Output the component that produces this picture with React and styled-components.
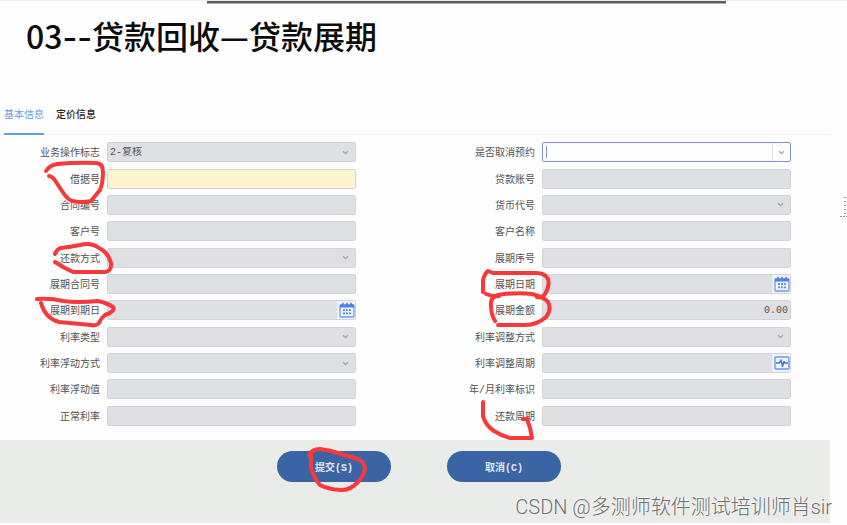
import React from "react";
import styled, { createGlobalStyle } from "styled-components";

const GlobalStyle = createGlobalStyle`
  * {
    box-sizing: border-box;
  }

  body {
    margin: 0;
    background: #fefefe;
    font-family: "Liberation Mono", "Noto Sans CJK SC", monospace;
    font-size: 10px;
    color: #535355;
  }

  button,
  input,
  select {
    font: inherit;
    color: inherit;
  }
`;

const Page = styled.div`
  position: relative;
  display: flex;
  flex-direction: column;
  min-height: 100vh;
  padding: 0 17px 2px 0;
`;

const TopBar = styled.div`
  height: 4px;
  margin-right: -17px;
  padding: 0 121px 0 207px;
  border-top: 1px solid #ededed;

  &::before {
    content: "";
    display: block;
    height: 2px;
    background: #5c6064;
    border-bottom: 1px solid #a9abad;
  }
`;

const Title = styled.h1`
  margin: 0;
  padding: 9px 26px 0;
  font-family: "Noto Sans CJK SC", sans-serif;
  font-size: 32px;
  font-weight: 500;
  line-height: 44px;
  color: #0c0c0c;

  span {
    font-family: Inter, sans-serif;
    line-height: 1;
  }
`;

const Tabs = styled.nav`
  display: flex;
  gap: 12px;
  margin-top: 49px;
  padding-left: 4px;
  border-bottom: 1px solid #f1f1f1;
`;

const Tab = styled.button`
  padding: 0 0 7px;
  margin-bottom: -1px;
  border: none;
  border-bottom: 2px solid ${(p) => (p.$active ? "#5b9fdf" : "transparent")};
  background: none;
  line-height: 20px;
  font-weight: ${(p) => (p.$active ? 400 : 500)};
  color: ${(p) => (p.$active ? "#5b9fdf" : "#2c2222")};
`;

const Form = styled.form`
  flex: 1;
  display: flex;
  flex-direction: column;
`;

const Fields = styled.div`
  flex: 1;
  display: grid;
  grid-template-columns: 1fr 1fr;
  grid-auto-rows: minmax(24px, 1fr);
  column-gap: 79px;
  padding: 4px 39px 11px 0;
`;

const Row = styled.div`
  display: flex;
  align-items: center;
  gap: 7px;
`;

const Label = styled.label`
  position: relative;
  width: 100px;
  flex: none;
  padding-top: 4px;
  line-height: 20px;
  text-align: right;
  white-space: nowrap;
`;

const backgrounds = {
  required: "#fef4d2",
  focus: "#fefefe",
};

const Control = styled.div`
  position: relative;
  flex: 1;
  min-width: 0;
  display: flex;
  align-items: center;
  height: 20px;
  border: 1px solid ${(p) => (p.$tone === "focus" ? "#7f93cb" : "#d3d4d6")};
  border-radius: 2px;
  background: ${(p) => backgrounds[p.$tone] || "#dfe0e4"};
`;

const Input = styled.input`
  flex: 1;
  min-width: 0;
  height: 100%;
  padding: 0 2px;
  border: none;
  outline: none;
  background: none;
  text-align: ${(p) => (p.$right ? "right" : "left")};
`;

const Select = styled.select`
  flex: 1;
  min-width: 0;
  height: 100%;
  padding: 0 18px 0 2px;
  border: none;
  outline: none;
  background: none;
  appearance: none;
`;

const Caret = styled.span`
  width: 1px;
  height: 12px;
  margin-left: 3px;
  background: #8b97bb;
`;

const Addon = styled.button`
  display: flex;
  align-items: center;
  justify-content: center;
  width: 18px;
  height: 18px;
  padding: 0;
  border: none;
  border-left: 1px solid ${(p) => (p.$plain ? "#d6e3f5" : "#eeeff2")};
  background: ${(p) => (p.$plain ? "none" : "#f1f3f8")};
`;

const SelectArrow = styled.span`
  position: absolute;
  right: 6px;
  display: flex;
  pointer-events: none;
`;

// Pen strokes start from the left edge and vertical middle of their owner
const Pen = styled.svg`
  position: absolute;
  z-index: 1;
  left: 0;
  top: 50%;
  width: 1px;
  height: 1px;
  overflow: visible;
  pointer-events: none;
  fill: none;
  stroke: #f93939;
  stroke-width: 4;
  stroke-linecap: round;
  stroke-linejoin: round;
`;

const Footer = styled.footer`
  position: relative;
  display: flex;
  justify-content: center;
  gap: 56px;
  height: 83px;
  padding: 11px 0 0 8px;
  background: #eaecea;
`;

const ActionButton = styled.button`
  position: relative;
  width: 114px;
  height: 31px;
  padding: 0;
  border: none;
  border-radius: 16px;
  background: #3b64a5;
  color: #e4eaf5;
  font-weight: 700;
`;

const Watermark = styled.span`
  position: absolute;
  right: -2px;
  bottom: 2px;
  font-family: Roboto, "Noto Sans CJK SC", sans-serif;
  font-size: 20px;
  font-weight: 300;
  line-height: 28px;
  white-space: nowrap;
  color: #6f7070;
  text-shadow: -1px -1px 0 #f8f8f8;
`;

const EdgeMark = styled.svg`
  position: absolute;
  right: 0;
  top: 196px;
`;

const Chevron = () => (
  <svg width="7" height="5" viewBox="0 0 7 5" fill="none" stroke="#a0a1a6">
    <path d="M1 1.2 3.5 3.6 6 1.2" strokeWidth="1.2" />
  </svg>
);

const CalendarIcon = () => (
  <svg width="16" height="16" viewBox="0 0 16 16" fill="none">
    <rect x="1" y="3" width="14" height="12" rx="1" stroke="#6f9cf0" strokeWidth="1.3" />
    <path d="M1 2.5h14v3H1z" fill="#4f82ee" />
    <path d="M4 .8v3M8 .8v3M12 .8v3" stroke="#4f82ee" strokeWidth="1.6" />
    <path
      d="M4 8.2h2M7 8.2h2M10 8.2h2M4 11.4h2M7 11.4h2M10 11.4h2"
      stroke="#5b8bef"
      strokeWidth="1.8"
    />
  </svg>
);

const PulseIcon = () => (
  <svg width="16" height="16" viewBox="0 0 16 16" fill="none">
    <rect x="1" y="2" width="14" height="12" rx="1" stroke="#6699ee" strokeWidth="1.4" />
    <path
      d="M2 8h3.4L7 5l1.6 6.4L10 6.4l.8 1.6H14"
      stroke="#3f78ea"
      strokeWidth="1.5"
      strokeLinejoin="round"
    />
  </svg>
);

const fields = [
  { id: "opFlag", label: "业务操作标志", type: "select", value: "2-复核" },
  { id: "cancelFlag", label: "是否取消预约", type: "combo", tone: "focus" },
  {
    id: "iouNo",
    label: "借据号",
    tone: "required",
    pen: "M46-8Q50-14 57-15Q78-17 96-16Q103-16 103-7Q103 4 100 11L91 22Q82 24 72 22Q67 20 62 12L54 0Q51-3 49-3",
  },
  { id: "loanAcct", label: "贷款账号" },
  { id: "contractNo", label: "合同编号" },
  { id: "currency", label: "货币代号", type: "select" },
  { id: "custNo", label: "客户号" },
  { id: "custName", label: "客户名称" },
  {
    id: "repayWay",
    label: "还款方式",
    type: "select",
    pen: "M55-4Q57-9 61-10Q70-11 80-13Q91-16 99-10Q108-6 111 5Q112 13 105 14H73Q64 10 55 4",
  },
  { id: "extSeq", label: "展期序号" },
  { id: "extContract", label: "展期合同号" },
  {
    id: "extDate",
    label: "展期日期",
    type: "date",
    pen: "M48 8V-4Q50-11 53-13L58-11H101Q110-11 113-5Q115 2 110 10Q106 15 102 13M51 10Q58 13 64 12",
  },
  {
    id: "extDue",
    label: "展期到期日",
    type: "date",
    pen: "M37-11Q51-12 63-9Q77-7 98-9Q107-7 113-3Q116 1 105 5Q101 8 99 13Q97 16 91 15L59 12Q45 8 41-7",
  },
  {
    id: "extAmount",
    label: "展期金额",
    value: "0.00",
    right: true,
    pen: "M60 11Q56 4 56-4Q55-13 63-15Q81-18 97-16Q109-13 113-8Q117-1 111 7Q102 15 90 15H63",
  },
  { id: "rateType", label: "利率类型", type: "select" },
  { id: "rateAdjWay", label: "利率调整方式", type: "select" },
  { id: "floatWay", label: "利率浮动方式", type: "select" },
  { id: "rateAdjCycle", label: "利率调整周期", type: "cycle" },
  { id: "floatValue", label: "利率浮动值" },
  { id: "rateFlag", label: "年/月利率标识" },
  { id: "normalRate", label: "正常利率" },
  {
    id: "repayCycle",
    label: "还款周期",
    pen: "M48-14V0Q50 9 59 15Q67 20 75 22H97Q96 13 92 3L88 3",
  },
];

const Field = ({ id, label, type, value = "", tone, right, pen }) => (
  <Row>
    <Label htmlFor={id}>
      {label}
      {pen && (
        <Pen aria-hidden="true">
          <path d={pen} />
        </Pen>
      )}
    </Label>
    <Control $tone={tone}>
      {type === "combo" && <Caret />}
      {type === "select" ? (
        <>
          <Select id={id} defaultValue={value}>
            <option value={value}>{value}</option>
          </Select>
          <SelectArrow>
            <Chevron />
          </SelectArrow>
        </>
      ) : (
        <Input id={id} defaultValue={value} $right={right} />
      )}
      {type === "combo" && (
        <Addon type="button" $plain aria-label={label}>
          <Chevron />
        </Addon>
      )}
      {type === "date" && (
        <Addon type="button" aria-label={label}>
          <CalendarIcon />
        </Addon>
      )}
      {type === "cycle" && (
        <Addon type="button" aria-label={label}>
          <PulseIcon />
        </Addon>
      )}
    </Control>
  </Row>
);

const App = () => {
  return (
    <Page>
      <GlobalStyle />
      <TopBar />
      <Title>
        03<span>--</span>贷款回收—贷款展期
      </Title>
      <Tabs>
        <Tab type="button" $active>
          基本信息
        </Tab>
        <Tab type="button">定价信息</Tab>
      </Tabs>
      <Form onSubmit={(e) => e.preventDefault()}>
        <Fields>
          {fields.map((field) => (
            <Field key={field.id} {...field} />
          ))}
        </Fields>
        <Footer>
          <ActionButton type="submit">
            提交(S)
            <Pen aria-hidden="true">
              <path d="M32-12Q35-18 43-18Q53-17 64-13L81-8Q88-5 88 2Q87 9 80 16Q72 24 63 23Q51 22 43 18Q36 10 34 0V-13" />
            </Pen>
          </ActionButton>
          <ActionButton type="button">取消(C)</ActionButton>
          <Watermark>CSDN @多测师软件测试培训师肖sir</Watermark>
        </Footer>
      </Form>
      <EdgeMark width="7" height="21" viewBox="0 0 7 21" stroke="#999" aria-hidden="true">
        <path d="M4 1.5h3M4 5.5h3M4 9.5h3M4 13.5h3M4 17.5h3M0 20.5h7" strokeDasharray="2 1" />
      </EdgeMark>
    </Page>
  );
};

export default App;
